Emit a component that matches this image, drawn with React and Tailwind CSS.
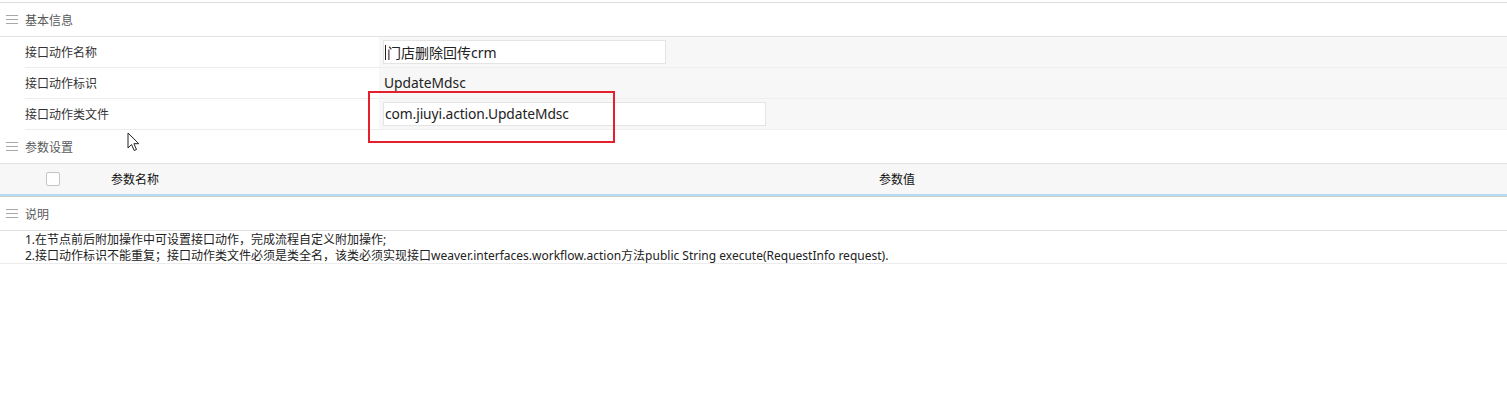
import React from "react";

const font = { fontFamily: '"Noto Sans", "Noto Sans CJK SC", sans-serif' };

function Burger() {
  return (
    <svg width="12" height="9" viewBox="0 0 12 9" className="mr-[7px] shrink-0">
      <rect x="0" y="0" width="12" height="1" fill="#a8a8a8" />
      <rect x="0" y="4" width="12" height="1" fill="#a8a8a8" />
      <rect x="0" y="8" width="12" height="1" fill="#a8a8a8" />
    </svg>
  );
}

function SectionHeader({ title }) {
  return (
    <div className="h-[34px] flex items-center pl-[6px] border-b border-[#e2e2e2] bg-white">
      <Burger />
      <span className="text-[12px] text-[#5a5a5a] pt-[2px]">{title}</span>
    </div>
  );
}

function Row({ label, children }) {
  return (
    <div className="flex h-[31px]">
      <div className="w-[379px] pl-[25px] shrink-0 bg-white">
        <div className="h-full border-b border-[#ececec] flex items-center pt-[2px] text-[12px] text-[#333]">
          {label}
        </div>
      </div>
      <div className="flex-1 bg-[#f7f7f7] border-b border-[#efefef] flex items-center pl-[4px]">
        {children}
      </div>
    </div>
  );
}

export default function App() {
  return (
    <div className="relative w-[1507px] h-[406px] bg-white overflow-hidden" style={font}>
      <div className="mt-[2px] border-t border-[#dcdcdc]">
        <SectionHeader title="基本信息" />
        <Row label="接口动作名称">
          <div className="w-[283px] h-[24px] bg-white border border-[#e4e4e4] flex items-center pl-[1px] text-[14px] text-[#222]">
            <span className="inline-block w-[1px] h-[15px] bg-[#222] mr-[1px]" />
            门店删除回传crm
          </div>
        </Row>
        <Row label="接口动作标识">
          <span className="text-[13.8px] text-[#222] pl-[1px] pt-[1px]">UpdateMdsc</span>
        </Row>
        <Row label="接口动作类文件">
          <div className="w-[383px] h-[24px] bg-white border border-[#e4e4e4] flex items-center pl-[1px] text-[13.8px] tracking-[-0.1px] text-[#222]">
            com.jiuyi.action.UpdateMdsc
          </div>
        </Row>
        <SectionHeader title="参数设置" />
        <div className="h-[30px] bg-[#f7f7f7] flex items-center text-[12px] text-[#111]">
          <div className="w-[111px] pl-[46px] shrink-0 flex items-center">
            <span className="block w-[14px] h-[14px] bg-white border border-[#c4c4c4] rounded-[2px]" />
          </div>
          <div className="w-[768px] shrink-0 pt-[2px]">参数名称</div>
          <div className="pt-[2px]">参数值</div>
        </div>
        <div className="h-[2px] bg-[#b6dcf5]" />
        <div className="h-[1px] bg-[#cfcfcf]" />
        <SectionHeader title="说明" />
        <div className="h-[33px] border-b border-[#ececec] pl-[25px] pt-[1px] text-[12px] leading-[16px] text-[#222]">
          <div>1.在节点前后附加操作中可设置接口动作，完成流程自定义附加操作;</div>
          <div>2.接口动作标识不能重复；接口动作类文件必须是类全名，该类必须实现接口weaver.interfaces.workflow.action方法public String execute(RequestInfo request).</div>
        </div>
      </div>

      <div className="absolute left-[368px] top-[91px] w-[247px] h-[52px] border-2 border-[#e3202b]" />

      <svg className="absolute left-[127px] top-[132px]" width="14" height="20" viewBox="0 0 14 20">
        <path d="M1 1 L1 16 L4.5 12.5 L7.2 18.5 L9.5 17.5 L6.9 11.7 L11.8 11.7 Z" fill="#fff" stroke="#222" strokeWidth="1" strokeLinejoin="round" />
      </svg>
    </div>
  );
}
